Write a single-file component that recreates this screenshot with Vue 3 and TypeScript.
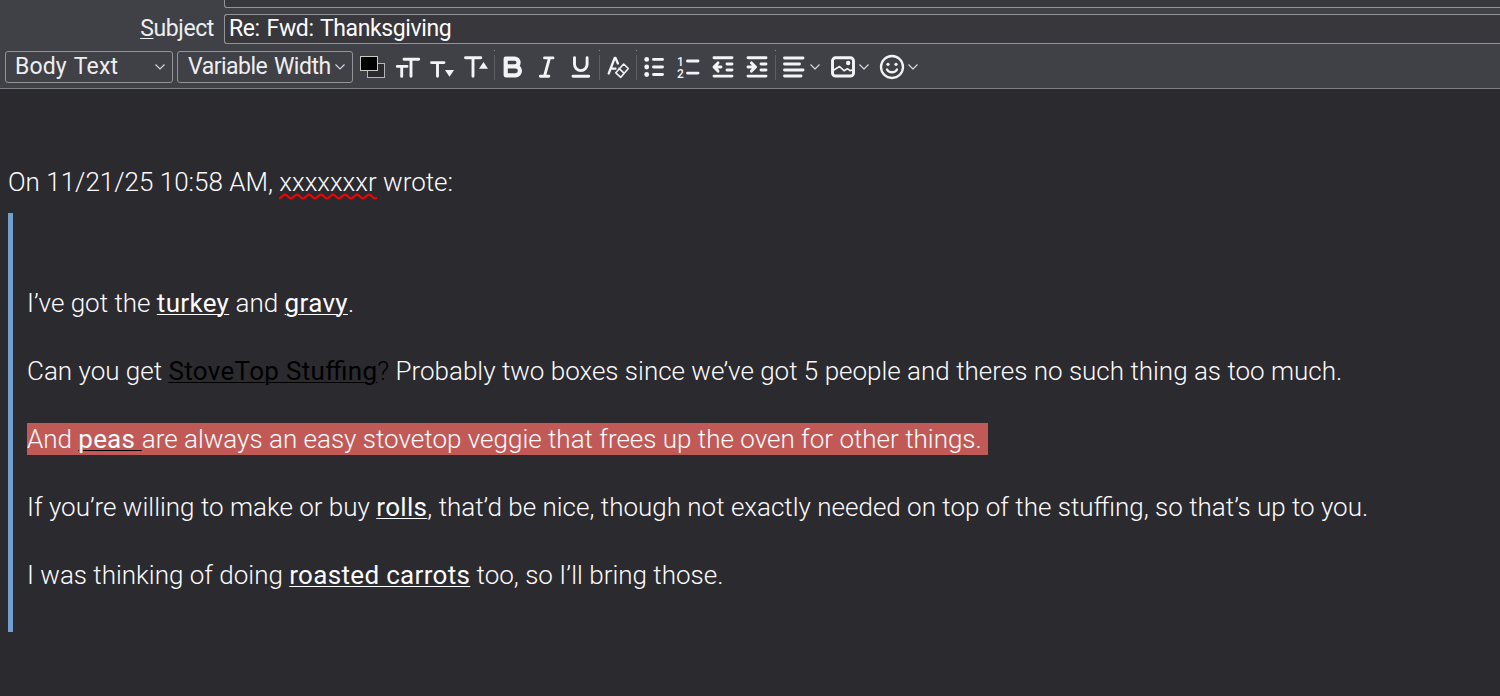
<script setup lang="ts">
interface Run {
  text: string
  kind?: 'key' | 'dark' | 'darkKey' | 'markedKey'
}
interface Paragraph {
  id: string
  marked?: boolean
  runs: Run[]
}

const subject = 'Re: Fwd: Thanksgiving'

const paragraphs: Paragraph[] = [
  { id: 'turkey', runs: [{ text: 'I’ve got the ' }, { text: 'turkey', kind: 'key' }, { text: ' and ' }, { text: 'gravy', kind: 'key' }, { text: '.' }] },
  {
    id: 'stuffing',
    runs: [
      { text: 'Can you get ' },
      { text: 'StoveTop Stuffing', kind: 'darkKey' },
      { text: '?', kind: 'dark' },
      { text: ' Probably two boxes since we’ve got 5 people and theres no such thing as too much.' },
    ],
  },
  {
    id: 'peas',
    marked: true,
    runs: [
      { text: 'And ' },
      { text: 'peas ', kind: 'markedKey' },
      { text: 'are always an easy stovetop veggie that frees up the oven for other things. ' },
    ],
  },
  {
    id: 'rolls',
    runs: [
      { text: 'If you’re willing to make or buy ' },
      { text: 'rolls', kind: 'key' },
      { text: ', that’d be nice, though not exactly needed on top of the stuffing, so that’s up to you.' },
    ],
  },
  { id: 'carrots', runs: [{ text: 'I was thinking of doing ' }, { text: 'roasted carrots', kind: 'key' }, { text: ' too, so I’ll bring those.' }] },
]
</script>

<template>
  <main class="compose">
    <header class="head">
      <div class="field previous"></div>
      <div class="subject-row">
        <label class="subject-label"><u>S</u>ubject</label>
        <div class="field subject">{{ subject }}</div>
      </div>
      <div class="toolbar">
        <div class="select style-select">
          <span class="body-label">Body Text</span>
          <svg width="12" height="8" viewBox="0 0 12 8"><path class="chev" d="M1.500 1.500 6 6l4.500-4.500" /></svg>
        </div>
        <div class="select font-select">
          <span class="width-label">Variable Width</span>
          <svg width="12" height="8" viewBox="0 0 12 8"><path class="chev" d="M1.500 1.500 6 6l4.500-4.500" /></svg>
        </div>
        <div class="icons">
          <svg width="37" height="36" viewBox="353 48 37 36">
            <rect x="367.500" y="63.500" width="17" height="14" fill="#2b2a2f" stroke="#b4b4b7" />
            <rect x="360.500" y="56.500" width="17" height="14" fill="#000" stroke="#c8c8ca" />
          </svg>
          <svg class="ink" width="34" height="36" viewBox="390 48 34 36">
            <path d="M404 59.300h14.700M411 59.300v17M397.300 66.400h9.700M401.700 66.400v10" />
          </svg>
          <svg class="ink" width="34" height="36" viewBox="424 48 34 36">
            <path d="M431.500 62.600h12.500M437.500 62.600v13.700" />
            <path class="solid" d="M445 70h9l-4.500 6.700z" />
          </svg>
          <svg class="ink" width="36" height="36" viewBox="458 48 36 36">
            <path d="M465.500 57.800h15.300M473 57.800v18.500" />
            <path class="solid" d="M479 68.700h9L483.500 62z" />
          </svg>
          <i class="sep"></i>
          <svg class="ink" width="35" height="36" viewBox="495 48 35 36">
            <path class="heavy" d="M505.700 58.600h9a3.900 3.900 0 0 1 0 7.800h-9 9.800a4.450 4.450 0 0 1 0 8.900h-9.800z" />
          </svg>
          <svg class="ink" width="34" height="36" viewBox="530 48 34 36">
            <path d="M544.500 57.900h8.500M540.300 76.200h8.500M549.500 57.900l-5 18.300" />
          </svg>
          <svg class="ink" width="35" height="36" viewBox="564 48 35 36">
            <path d="M574.500 57.800v6.500a6.300 6.300 0 0 0 12.600 0v-6.500M573 76.300h15.700" />
          </svg>
          <i class="sep"></i>
          <svg class="ink" width="36" height="36" viewBox="600 48 36 36">
            <path class="medium" d="M608.700 73.500l6-15.500h.8l2.400 5.500M611.500 68.700h4" />
            <path class="fine" d="M623.700 64l4.600 4.500-7.500 8.800-5-4.500zM619 68.400l5 4.700" />
          </svg>
          <i class="sep"></i>
          <svg class="ink" width="33" height="36" viewBox="637 48 33 36">
            <path d="M653.500 59.400h9M653.500 67h9M653.500 74.500h9" />
            <g class="solid"><circle cx="646.700" cy="59.400" r="2.400" /><circle cx="646.700" cy="67" r="2.400" /><circle cx="646.700" cy="74.500" r="2.400" /></g>
          </svg>
          <svg class="ink" width="34" height="36" viewBox="670 48 34 36">
            <text x="677" y="66">1</text><text x="677" y="77.500">2</text>
            <path d="M687.500 61h10.500M687.500 73.100h10.500" />
          </svg>
          <svg class="ink" width="35" height="36" viewBox="704 48 35 36">
            <path d="M714 57.800h18M714 76.100h18M727 64h5M727 70h5M721 67h-6M718 62.900l-4 4.100 4 4.100" />
          </svg>
          <svg class="ink" width="36" height="36" viewBox="739 48 36 36">
            <path d="M748 57.800h18M748 76.100h18M761 64h5M761 70h5M748 67h6M751.500 62.900l4 4.100-4 4.100" />
          </svg>
          <i class="sep"></i>
          <svg class="ink" width="48" height="36" viewBox="776 48 48 36">
            <path d="M784.500 58h18.500M784.500 64h15M784.500 70h18.500M784.500 76h16.500" />
            <path class="chev" d="M810.500 64.500l4.500 4.500 4.500-4.500" />
          </svg>
          <svg class="ink" width="50" height="36" viewBox="824 48 50 36">
            <rect x="832.500" y="57.800" width="21" height="18.200" rx="3" />
            <circle class="solid" cx="848.200" cy="63" r="2.200" />
            <path class="fine" d="M833 70.500l2.500-1.500 4-2.500 4.500 4.200 3.500-2 2.500 2 2-.7 2 1.500" />
            <path class="chev" d="M859.500 64.500l4.500 4.500 4.500-4.500" />
          </svg>
          <svg class="ink" width="50" height="36" viewBox="874 48 50 36">
            <circle class="medium" cx="892" cy="67" r="11" />
            <g class="solid"><circle cx="888" cy="64.300" r="1.600" /><circle cx="896" cy="64.300" r="1.600" /></g>
            <path class="medium" d="M887 69.500c2 3.700 8 3.700 10 0" />
            <path class="chev" d="M908.500 64.500l4.500 4.500 4.500-4.500" />
          </svg>
        </div>
      </div>
    </header>

    <article class="message">
      <p class="intro">On 11/21/25 10:58 AM, <span class="misspelled">xxxxxxxr<svg class="wave" width="98" height="7" viewBox="0 0 98 7"><path d="M0 5.500Q1 5.500 3 3.500T6 1.500 9 3.500 12 5.500 15 3.500 18 1.500 21 3.500 24 5.500 27 3.500 30 1.500 33 3.500 36 5.500 39 3.500 42 1.500 45 3.500 48 5.500 51 3.500 54 1.500 57 3.500 60 5.500 63 3.500 66 1.500 69 3.500 72 5.500 75 3.500 78 1.500 81 3.500 84 5.500 87 3.500 90 1.500 93 3.500 96 5.500L98 5" /></svg></span> wrote:</p>
      <blockquote class="quote">
        <p v-for="p in paragraphs" :key="p.id"><span :class="{ marked: p.marked }"><span v-for="(run, i) in p.runs" :key="i" :class="run.kind">{{ run.text }}</span></span></p>
      </blockquote>
    </article>
  </main>
</template>

<style>
html,
body {
  margin: 0;
  background: #2b2a2f;
  overflow: hidden;
}
</style>

<style scoped>
.compose {
  display: flex;
  flex-direction: column;
  width: 1500px;
  height: 696px;
  overflow: hidden;
  background: #2b2a2f;
  color: #fbfbfe;
  font-family: Roboto, "Liberation Sans", sans-serif;
}
.head {
  box-sizing: border-box;
  flex: none;
  height: 89px;
  background: #404146;
  border-bottom: 1px solid #7f7f82;
  font-size: 23px;
  font-weight: 400;
}
.field {
  box-sizing: border-box;
  margin-left: 224px;
  border: 1px solid #949497;
  border-right: 0;
  background: #38373c;
}
.previous {
  height: 8px;
  border-top: 0;
  border-radius: 0 0 0 3px;
}
.subject-row {
  display: flex;
  margin-top: 6px;
  height: 30px;
}
.subject-label {
  width: 214px;
  text-align: right;
  line-height: 29px;
  letter-spacing: -0.38px;
  color: #eeeef1;
}
.subject-label u {
  text-decoration-thickness: 1px;
  text-underline-offset: 2px;
}
.subject {
  flex: 1;
  margin-left: 10px;
  padding-left: 4px;
  border-radius: 3px 0 0 3px;
  line-height: 27px;
  letter-spacing: -0.39px;
  word-spacing: 1.5px;
  white-space: pre;
}
.toolbar {
  display: flex;
  align-items: flex-start;
  padding: 4px 0 0 5px;
}
.select {
  box-sizing: border-box;
  display: flex;
  align-items: center;
  justify-content: space-between;
  flex: none;
  height: 32px;
  margin-top: 3px;
  border: 1px solid #949497;
  border-radius: 3px;
  line-height: 30px;
  white-space: nowrap;
  color: #eeeef1;
}
.select svg {
  flex: none;
}
.style-select {
  width: 168px;
  padding: 0 6px 0 9px;
}
.font-select {
  width: 176px;
  margin-left: 4px;
  padding: 0 6px 0 10px;
}
.body-label {
  letter-spacing: 0.15px;
  word-spacing: 1.5px;
}
.width-label {
  letter-spacing: -0.5px;
  word-spacing: 1.5px;
}
.icons {
  display: flex;
  height: 36px;
}
.icons svg {
  flex: none;
}
.sep {
  flex: none;
  width: 1px;
  height: 25px;
  margin-top: 7px;
  background: #5d5d62;
  position: relative;
}
.sep::before {
  content: "";
  position: absolute;
  top: -5px;
  left: 0;
  width: 1px;
  height: 1px;
  background: #8c8c90;
}
.ink {
  fill: none;
  stroke: #f4f4f6;
  stroke-width: 2.9;
  stroke-linecap: round;
  stroke-linejoin: round;
}
.ink .solid {
  fill: #f4f4f6;
  stroke: none;
}
.ink .heavy {
  stroke-width: 4.2;
}
.ink .medium {
  stroke-width: 2.3;
}
.ink .fine {
  stroke-width: 1.6;
}
.ink text {
  fill: #f4f4f6;
  stroke: none;
  font: 500 12px Roboto, sans-serif;
}
.chev,
.ink .chev {
  fill: none;
  stroke: #d5d5d8;
  stroke-width: 1.2;
  stroke-linecap: butt;
}
.message {
  flex: 1;
  padding: 76px 8px 0;
  font-size: 26px;
  font-weight: 300;
  line-height: 34px;
  white-space: pre;
}
p {
  margin: 0;
  height: 34px;
}
.misspelled {
  position: relative;
}
.wave {
  position: absolute;
  left: 0;
  top: 26px;
  fill: none;
  stroke: #f00;
  stroke-width: 2;
}
.quote {
  box-sizing: border-box;
  display: flex;
  flex-direction: column;
  gap: 34px;
  height: 419px;
  margin: 14px 0 0;
  padding: 73px 0 0 14px;
  border-left: 5px solid #729fcf;
}
.key,
.darkKey,
.markedKey {
  font-weight: 400;
  font-feature-settings: "liga" 1;
  letter-spacing: 0.32px;
  text-decoration: underline;
  text-decoration-thickness: 1px;
  text-underline-offset: 2px;
}
.markedKey {
  letter-spacing: 0.2px;
  text-decoration-color: #000;
}
.dark,
.darkKey {
  color: #000;
}
.marked {
  display: inline-block;
  height: 32px;
  line-height: 32px;
  background: #c15a57;
}
</style>
